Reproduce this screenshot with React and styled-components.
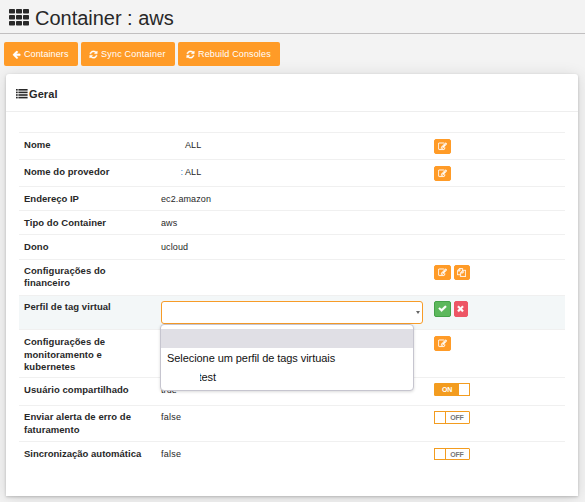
import React from "react";
import styled, { createGlobalStyle } from "styled-components";

const GlobalStyle = createGlobalStyle`
  * { box-sizing: border-box; }
  body {
    margin: 0;
    height: 502px;
    overflow: hidden;
    background: #f3f3f3;
    color: #282828;
    font-family: "Liberation Sans", Arial, sans-serif;
    font-size: 10px;
  }
`;

const paths = {
  back: "M1664 896v128q0 53-32.500 90.500t-84.500 37.500h-704l293 294q38 36 38 90t-38 90l-75 76q-37 37-90 37-52 0-91-37l-651-652q-37-37-37-90 0-52 37-91l651-650q38-38 91-38 52 0 90 38l75 74q38 38 38 91t-38 91l-293 293h704q52 0 84.500 37.500t32.500 90.500z",
  refresh: "M1639 1056q0 5-1 7-64 268-268 434.500t-478 166.500q-146 0-282.500-55t-243.500-157l-129 129q-19 19-45 19t-45-19-19-45v-448q0-26 19-45t45-19h448q26 0 45 19t19 45-19 45l-137 137q71 66 161 102t187 36q134 0 250-65t186-179q11-17 53-117 8-23 30-23h192q13 0 22.500 9.500t9.500 22.500zm25-800v448q0 26-19 45t-45 19h-448q-26 0-45-19t-19-45 19-45l138-138q-148-137-349-137-134 0-250 65t-186 179q-11 17-53 117-8 23-30 23h-199q-13 0-22.500-9.500t-9.500-22.500v-7q65-268 270-434.500t480-166.500q146 0 284 55.500t245 156.500l130-129q19-19 45-19t45 19 19 45z",
  check: "M1671 566q0 40-28 68l-724 724-136 136q-28 28-68 28t-68-28l-136-136-362-362q-28-28-28-68t28-68l136-136q28-28 68-28t68 28l294 295 656-657q28-28 68-28t68 28l136 136q28 28 28 68z",
  times: "M1490 1322q0 40-28 68l-136 136q-28 28-68 28t-68-28l-294-294-294 294q-28 28-68 28t-68-28l-136-136q-28-28-28-68t28-68l294-294-294-294q-28-28-28-68t28-68l136-136q28-28 68-28t68 28l294 294 294-294q28-28 68-28t68 28l136 136q28 28 28 68t-28 68l-294 294 294 294q28 28 28 68z",
  edit: "M888 1184l116-116-152-152-116 116v56h96v96h56zm440-720q-16-16-33 1l-350 350q-17 17-1 33t33-1l350-350q17-17 1-33zm80 594v190q0 119-84.500 203.500t-203.500 84.500h-832q-119 0-203.500-84.500t-84.500-203.500v-832q0-119 84.500-203.500t203.500-84.500h832q63 0 117 25 15 7 18 23 3 17-9 29l-49 49q-14 14-32 8-23-6-45-6h-832q-66 0-113 47t-47 113v832q0 66 47 113t113 47h832q66 0 113-47t47-113v-126q0-13 9-22l64-64q15-15 35-7t20 29zm-96-738l288 288-672 672h-288v-288zm444 132l-92 92-288-288 92-92q28-28 68-28t68 28l152 152q28 28 28 68t-28 68z",
  copy: "M1696 384q40 0 68 28t28 68v1216q0 40-28 68t-68 28h-960q-40 0-68-28t-28-68v-288h-544q-40 0-68-28t-28-68v-672q0-40 20-88t48-76l408-408q28-28 76-48t88-20h416q40 0 68 28t28 68v328q68-40 128-40h416zm-544 213l-299 299h299v-299zm-640-384l-299 299h299v-299zm196 647l316-316v-416h-384v416q0 40-28 68t-68 28h-416v640h512v-256q0-40 20-88t48-76zm956 804v-1152h-384v416q0 40-28 68t-68 28h-416v640h896z",
};

const Glyph = styled.svg`
  display: block;
  flex: none;
  fill: currentColor;
`;

const WeightedGlyph = styled(Glyph)`
  stroke: currentColor;
  stroke-width: 60px;
`;

const Icon = ({ name, size }) => (
  <WeightedGlyph width={size} height={size} viewBox="0 0 1792 1792">
    <path d={paths[name]} />
  </WeightedGlyph>
);

const GridIcon = () => (
  <Glyph width="21" height="17" viewBox="0 0 21 17">
    {[0, 6, 12].map((y) =>
      [0, 7, 14].map((x) => (
        <rect key={`${x}-${y}`} x={x} y={y} width="6" height="4.6" rx="0.8" />
      ))
    )}
  </Glyph>
);

const ListIcon = () => (
  <Glyph width="12" height="10" viewBox="0 0 12 10">
    {[0, 2.6, 5.2, 7.8].map((y) => (
      <g key={y}>
        <rect x="0" y={y} width="1.7" height="1.6" />
        <rect x="2.4" y={y} width="9.2" height="1.6" />
      </g>
    ))}
  </Glyph>
);

const Header = styled.header`
  display: flex;
  height: 34px;
  padding: 9px 0 0 9px;
  border-bottom: 1px solid #c1bfc0;
`;

const Title = styled.h1`
  margin: -2px 0 0 5px;
  font-size: 20px;
  line-height: 22px;
  font-weight: 400;
  letter-spacing: -0.02px;
  white-space: nowrap;
`;

const Toolbar = styled.nav`
  display: flex;
  gap: 3px;
  padding: 8px 0 0 4px;
`;

const ToolButton = styled.button`
  display: flex;
  align-items: center;
  gap: 3px;
  width: ${(p) => p.$width}px;
  height: 24px;
  padding: 0 0 0 8px;
  border: 0;
  border-radius: 2px;
  background: #ff9b27;
  color: #fff;
  font: 9px "Liberation Sans", Arial, sans-serif;
  letter-spacing: ${(p) => p.$spacing}px;
  white-space: nowrap;
`;

const Panel = styled.section`
  width: 572px;
  height: 422px;
  margin: 8px 0 0 6px;
  border-radius: 3px 3px 0 0;
  background: #fff;
  box-shadow: 0 1px 3px rgba(0, 0, 0, 0.2), 0 2px 16px rgba(0, 0, 0, 0.12);
`;

const PanelHeader = styled.h2`
  display: flex;
  align-items: center;
  gap: 1px;
  height: 38px;
  margin: 0;
  padding: 3px 0 0 10px;
  border-bottom: 1px solid #eee;
  font-size: 11px;
  letter-spacing: 0.1px;
`;

const Table = styled.div`
  margin: 20px 13px 0;
`;

const Row = styled.div`
  display: grid;
  grid-template-columns: 142px 273px 1fr;
  height: ${(p) => p.$height}px;
  border-top: 1px solid #f0f0f0;
  background: ${(p) => (p.$active ? "#f3f7f8" : "#fff")};
`;

const Label = styled.div`
  padding: ${(p) => p.$top}px 0 0 5px;
  font-size: 9.5px;
  font-weight: 700;
  line-height: ${(p) => p.$lineHeight || 12}px;
  letter-spacing: ${(p) => p.$spacing ?? 0.06}px;
  white-space: pre;
`;

const Value = styled.div`
  position: relative;
  padding: ${(p) => p.$top}px 0 0 ${(p) => p.$indent || 0}px;
  font-size: 9px;
  line-height: 12px;
  letter-spacing: ${(p) => p.$spacing ?? 0.1}px;
`;

const Fragment = styled.span`
  position: absolute;
  top: 6px;
  left: 19.5px;
  width: 3px;
  overflow: hidden;
  color: #2f86cf;
  font-size: 9px;
`;

const Actions = styled.div`
  display: flex;
  align-items: flex-start;
  gap: 3px;
  padding-top: ${(p) => p.$top}px;
`;

const tones = {
  orange: ["#ff9b27", "#ff9b27"],
  green: ["#5cb85c", "#45a249"],
  red: ["#ed5565", "#ed5565"],
};

const ActionButton = styled.button`
  display: flex;
  align-items: center;
  justify-content: center;
  width: ${(p) => p.$width || 17}px;
  height: ${(p) => p.$height || 15}px;
  padding: 0 1px 1px 0;
  border: 1px solid ${(p) => tones[p.$tone || "orange"][1]};
  border-radius: 2px;
  background: ${(p) => tones[p.$tone || "orange"][0]};
  color: #fff;
`;

const Switch = styled.div`
  display: flex;
  flex-direction: ${(p) => (p.$on ? "row-reverse" : "row")};
  width: 36px;
  height: ${(p) => p.$height || 13}px;
  border: 1px solid #f39c1f;
  border-radius: 1px;
  background: ${(p) => (p.$on ? "#f39c1f" : "#fff")};
  color: ${(p) => (p.$on ? "#fff" : "#777")};
  font-size: 7px;
  font-weight: 700;
  line-height: 11px;
`;

const Knob = styled.span`
  width: 10px;
  background: #fff;
  box-shadow: 0 0 0 1px #f39c1f;
`;

const SwitchText = styled.span`
  flex: 1;
  text-align: center;
  letter-spacing: -0.2px;
`;

const Select = styled.div`
  display: flex;
  align-items: center;
  justify-content: flex-end;
  width: 262px;
  height: 23px;
  padding-right: 2px;
  border: 1px solid #f79c28;
  border-radius: 3px;
  background: #fff;
`;

const Caret = styled.span`
  border: 2.5px solid transparent;
  border-width: 3px 2.5px 0;
  border-top-color: #666;
`;

const Menu = styled.div`
  position: absolute;
  z-index: 1;
  top: 28px;
  left: -1px;
  width: 254px;
  height: 67px;
  padding-top: 4px;
  border: 1px solid #c6c5cf;
  border-radius: 4px;
  background: #fff;
  box-shadow: 0 1px 3px rgba(0, 0, 0, 0.15);
`;

const Option = styled.div`
  height: 19px;
  padding-left: ${(p) => p.$indent || 6}px;
  background: ${(p) => (p.$selected ? "#e0dfe5" : "transparent")};
  color: #111;
  font-size: 11px;
  line-height: 20px;
  letter-spacing: -0.07px;
`;

const ClippedText = styled.span`
  display: block;
  overflow: hidden;
  text-indent: -1.5px;
`;

const EditButton = () => (
  <ActionButton><Icon name="edit" size={9} /></ActionButton>
);

const Toggle = ({ on, height }) => (
  <Switch $on={on} $height={height}>
    <Knob />
    <SwitchText>{on ? "ON" : "OFF"}</SwitchText>
  </Switch>
);

const ProfileSelect = () => (
  <>
    <Select><Caret /></Select>
    <Menu>
      <Option $selected />
      <Option>Selecione um perfil de tags virtuais</Option>
      <Option $indent={39}><ClippedText>test</ClippedText></Option>
    </Menu>
  </>
);

const rows = [
  { label: "Nome", value: "ALL", indent: 24, height: 27, actionTop: 6, action: <EditButton /> },
  { label: "Nome do provedor", value: <><Fragment>:</Fragment>ALL</>, indent: 24, height: 27, actionTop: 6, action: <EditButton /> },
  { label: "Endereço IP", value: "ec2.amazon", height: 24, spacing: 0 },
  { label: "Tipo do Container", value: "aws", height: 24 },
  { label: "Dono", value: "ucloud", height: 25 },
  {
    label: "Configurações do\nfinanceiro", height: 36, top: 5, actionTop: 5,
    action: <><EditButton /><ActionButton $width={16}><Icon name="copy" size={9} /></ActionButton></>,
  },
  {
    label: "Perfil de tag virtual", value: <ProfileSelect />, height: 34, valueTop: 5, top: 5, active: true, actionTop: 5,
    action: (
      <>
        <ActionButton $height={16} $tone="green"><Icon name="check" size={9} /></ActionButton>
        <ActionButton $width={14} $height={16} $tone="red"><Icon name="times" size={9} /></ActionButton>
      </>
    ),
  },
  { label: "Configurações de\nmonitoramento e\nkubernetes", height: 48, lineHeight: 12.5, actionTop: 6, action: <EditButton /> },
  { label: "Usuário compartilhado", value: "true", height: 28, actionTop: 5, action: <Toggle on /> },
  { label: "Enviar alerta de erro de\nfaturamento", value: "false", height: 36, top: 5, lineHeight: 12.5, valueSpacing: 0.25, actionTop: 5, action: <Toggle /> },
  { label: "Sincronização automática", value: "false", height: 36, spacing: 0, valueSpacing: 0.25, actionTop: 6, action: <Toggle height={12} /> },
];

export default function App() {
  return (
    <>
      <GlobalStyle />
      <Header>
        <GridIcon />
        <Title>Container : aws</Title>
      </Header>
      <Toolbar>
        <ToolButton $width={74} $spacing={0.1}><Icon name="back" size={9} />Containers</ToolButton>
        <ToolButton $width={94} $spacing={0.22}><Icon name="refresh" size={9} />Sync Container</ToolButton>
        <ToolButton $width={102} $spacing={0.14}><Icon name="refresh" size={9} />Rebuild Consoles</ToolButton>
      </Toolbar>
      <Panel>
        <PanelHeader><ListIcon />Geral</PanelHeader>
        <Table>
          {rows.map((r) => (
            <Row key={r.label} $height={r.height} $active={r.active}>
              <Label $top={r.top ?? 6} $lineHeight={r.lineHeight} $spacing={r.spacing}>{r.label}</Label>
              <Value $top={r.valueTop ?? r.top ?? 6} $indent={r.indent} $spacing={r.valueSpacing}>{r.value}</Value>
              <Actions $top={r.actionTop ?? 0}>{r.action}</Actions>
            </Row>
          ))}
        </Table>
      </Panel>
    </>
  );
}
